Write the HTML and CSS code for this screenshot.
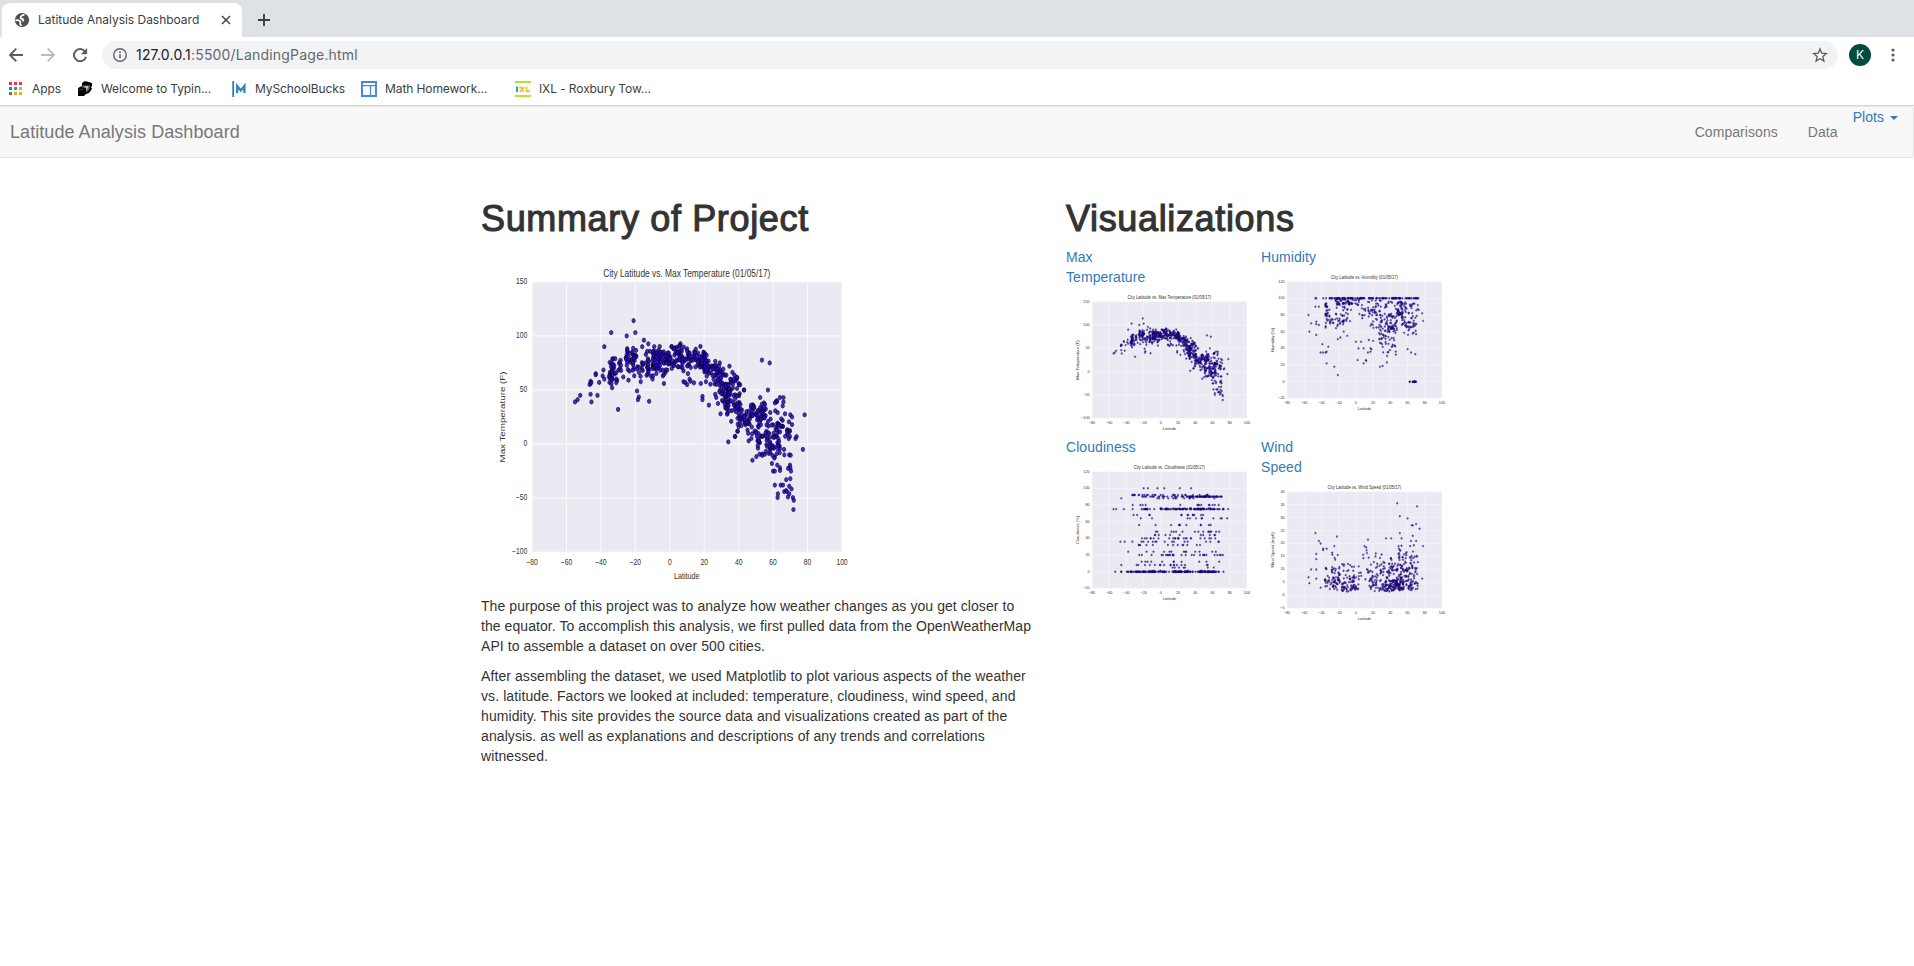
FILE: index.html
```html
<!DOCTYPE html>
<html lang="en">
<head>
<meta charset="utf-8">
<title>Latitude Analysis Dashboard</title>
<link rel="stylesheet" href="styles.css">
</head>
<body>
<header class="browser">
  <div class="tabstrip">
    <div class="tab">
      <svg class="globe" width="16" height="16" viewBox="0 0 16 16"><circle cx="8" cy="8" r="7.1" fill="#4d5156"/><path d="M9.800 2.800C8 3 7 4 6.600 5.300c-.2 1.100.6 1.500 1.700 1.600 1.200.2 1.300 1 .7 1.900M2.200 8.300c1.700-.3 3.200.2 4.100 1.200.4 1-.2 1.600-.3 2.700l1.200.9" fill="none" stroke="#fff" stroke-width="1.700" stroke-linecap="round"/></svg>
      <span class="tab-title">Latitude Analysis Dashboard</span>
      <svg class="close" width="10" height="10" viewBox="0 0 10 10"><path d="M1 1l8 8M9 1l-8 8" stroke="#45494d" stroke-width="1.600"/></svg>
    </div>
    <svg class="plus" width="12" height="12" viewBox="0 0 12 12"><path d="M6 0v12M0 6h12" stroke="#3c4043" stroke-width="1.900"/></svg>
  </div>
  <div class="toolbar">
    <svg class="tool" width="16" height="16" viewBox="0 0 16 16"><path d="M15 8H2.500M8.300 1.700L2 8l6.300 6.300" fill="none" stroke="#5a5e63" stroke-width="1.900"/></svg>
    <svg class="tool" width="16" height="16" viewBox="0 0 16 16"><path d="M1 8h12.500M7.700 1.700L14 8l-6.300 6.300" fill="none" stroke="#babcbe" stroke-width="1.900"/></svg>
    <svg class="tool" width="16" height="16" viewBox="0 0 16 16"><path d="M12.800 4.200A6.100 6.100 0 1 0 14 9.700" fill="none" stroke="#5a5e63" stroke-width="2"/><path d="M15.100 1v6.200H8.900z" fill="#5a5e63"/></svg>
    <div class="omnibox">
      <svg width="16" height="16" viewBox="0 0 16 16"><circle cx="8" cy="8" r="6.300" fill="none" stroke="#5f6368" stroke-width="1.400"/><path d="M8 7.200v4M8 4.300v1.600" stroke="#5f6368" stroke-width="1.600"/></svg>
      <span class="url"><b>127.0.0.1</b>:5500/LandingPage.html</span>
      <svg class="star" width="16" height="16" viewBox="0 0 16 16"><path d="M8 2l1.750 4.200 4.550.4-3.450 3 1.050 4.450L8 11.700l-3.900 2.350 1.050-4.450-3.450-3 4.550-.4z" fill="none" stroke="#5a5e63" stroke-width="1.350"/></svg>
    </div>
    <div class="avatar">K</div>
    <svg class="menu" width="4" height="14" viewBox="0 0 4 14"><g fill="#5a5e63"><circle cx="2" cy="2" r="1.600"/><circle cx="2" cy="7" r="1.600"/><circle cx="2" cy="12" r="1.600"/></g></svg>
  </div>
  <div class="bookmarks">
    <div class="mark apps"><svg width="14" height="14" viewBox="0 0 14 14"><path fill="#ee3344" d="M0 0h3v3H0zM5 0h3v3H5zM10 0h3v3h-3z"/><path fill="#249a5a" d="M0 5h3v3H0zM0 10h3v3H0z"/><path fill="#4285f4" d="M5 5h3v3H5z"/><path fill="#f4a62a" d="M10 5h3v3h-3zM5 10h3v3H5zM10 10h3v3h-3z"/></svg><span>Apps</span></div>
    <div class="mark typing"><svg width="16" height="16" viewBox="0 0 16 16"><path d="M5 2l3-2 7 2v3l-1 1 1 2-3 4-3 1-2 2H1V7l4-2z" fill="#050505"/><path d="M6 4.500h7l-1 4-3 3v-4L5 6z" fill="#777"/><path d="M8 5l3 .5-1 3z" fill="#ddd"/><path d="M2 9l4-1" stroke="#444"/></svg><span>Welcome to Typin...</span></div>
    <div class="mark school"><svg width="16" height="16" viewBox="0 0 16 16"><path d="M1.200 0v16" stroke="#3279b7" stroke-width="1.800"/><path d="M5.200 12V5l3.600 4.500L12.400 5v7" fill="none" stroke="#3185c5" stroke-width="2.300"/></svg><span>MySchoolBucks</span></div>
    <div class="mark math"><svg width="16" height="16" viewBox="0 0 16 16"><rect x="1" y="1" width="14" height="14" fill="#fff" stroke="#4a86e8" stroke-width="2"/><path d="M2 4.700h12M9.500 4.700V14" stroke="#4a86e8" stroke-width="1.200"/></svg><span>Math Homework...</span></div>
    <div class="mark ixl"><svg width="16" height="16" viewBox="0 0 16 16"><path fill="#aae43c" d="M0 0h16v2H0zM0 14h16v2H0z"/><path fill="#18a7d5" d="M1 5.500h2V11H1z"/><path d="M4.500 6.200h1L9 10.300M4.500 10.300h1L9 6.200M11.500 5.500v4.700H15" stroke="#f5bd35" stroke-width="1.900" fill="none"/></svg><span>IXL - Roxbury Tow...</span></div>
  </div>
</header>

<nav class="navbar">
  <a class="brand">Latitude Analysis Dashboard</a>
  <div class="links">
    <a class="comparisons">Comparisons</a>
    <a class="data">Data</a>
    <a class="plots">Plots <i class="caret"></i></a>
  </div>
</nav>

<main class="container">
  <section class="summary">
    <h1>Summary of Project</h1>
    <svg class="chart main-chart" data-plot="temp"></svg>
    <p>The purpose of this project was to analyze how weather changes as you get closer to<br>the equator. To accomplish this analysis, we first pulled data from the OpenWeatherMap<br>API to assemble a dataset on over 500 cities.</p>
    <p class="method">After assembling the dataset, we used Matplotlib to plot various aspects of the weather<br>vs. latitude. Factors we looked at included: temperature, cloudiness, wind speed, and<br>humidity. This site provides the source data and visualizations created as part of the<br>analysis. as well as explanations and descriptions of any trends and correlations<br>witnessed.</p>
  </section>
  <section class="visuals">
    <h1>Visualizations</h1>
    <div class="grid">
      <div><a>Max<br>Temperature</a><svg class="chart thumb" data-plot="temp"></svg></div>
      <div><a>Humidity</a><svg class="chart thumb" data-plot="humidity"></svg></div>
      <div><a>Cloudiness</a><svg class="chart thumb" data-plot="cloud"></svg></div>
      <div><a>Wind<br>Speed</a><svg class="chart thumb" data-plot="wind"></svg></div>
    </div>
  </section>
</main>
<script src="charts.js"></script>
</body>
</html>
```

FILE: styles.css
```css
* { box-sizing: border-box; }
body { margin: 0; background: #fff; color: #333; font: 14px/20px "Liberation Sans", Arial, sans-serif; overflow: hidden; }
svg { display: block; flex: none; }
a { color: #337ab7; letter-spacing: .06px; }

.browser { font-family: Inter, Roboto, sans-serif; color: #3c4043; height: 106px; border-bottom: 1px solid #d5d6d8; }
.tabstrip { height: 37px; background: #dee1e6; display: flex; padding: 3px 0 0 2px; }
.tab { width: 240px; height: 34px; background: #fff; border-radius: 8px 8px 0 0; display: flex; align-items: center; padding-left: 12px; }
.tab-title { width: 170px; margin-left: 8px; font-size: 12px; letter-spacing: -.02px; white-space: nowrap; }
.close { margin-left: 13px; }
.plus { margin: 11px 0 0 16px; }
.toolbar { height: 34px; display: flex; align-items: center; padding: 2px 0 0 8px; }
.tool { margin-right: 16px; }
.omnibox { width: 1736px; height: 28px; margin-left: -2px; border-radius: 14px; background: #f1f3f4; display: flex; align-items: center; padding: 0 10px; }
.url { margin-left: 8px; font-size: 14px; color: #66696d; letter-spacing: .19px; white-space: nowrap; }
.url b { font-weight: 400; color: #202124; }
.star { margin-left: auto; }
.avatar { width: 22px; height: 22px; margin-left: 11px; border-radius: 50%; background: #004d40; color: #fff; font-size: 12px; line-height: 22px; text-align: center; }
.menu { margin-left: 20px; }
.bookmarks { height: 34px; display: flex; align-items: center; padding: 2px 0 0 9px; font-size: 12px; letter-spacing: -.1px; }
.mark { display: flex; align-items: center; white-space: nowrap; }
.mark svg { margin-right: 8px; }
.apps { width: 68px; }
.apps svg { margin-right: 9px; }
.typing { width: 155px; }
.school { width: 129px; }
.school svg { margin-right: 7px; }
.math { width: 154px; }

.navbar { height: 52px; border: 1px solid #e7e7e7; border-left: 0; border-radius: 0 4px 4px 0; background: #f8f8f8; display: flex; justify-content: space-between; padding: 0 15px 0 10px; }
.navbar a { color: #777; line-height: 20px; }
.navbar .brand { font-size: 18px; padding-top: 15px; }
.links { display: flex; }
.comparisons, .data { padding: 15px 15px 0; }
.navbar .plots { color: #337ab7; }
.caret { display: inline-block; border: 4px solid transparent; border-top-color: #337ab7; border-bottom: 0; margin-left: 2px; vertical-align: middle; }

.container { display: flex; padding: 41px 0 0 481px; }
.summary { width: 585px; }
h1 { margin: 0 0 8px; font-size: 36px; line-height: 40px; font-weight: 400; letter-spacing: .65px; -webkit-text-stroke: 1.1px #333; }
p { margin: 0 0 10px; white-space: nowrap; letter-spacing: .068px; }
.method { letter-spacing: .09px; }
.main-chart { width: 400px; height: 338px; margin: 9px 0 10px 1px; }
.grid { display: grid; grid-template-columns: 195px 195px; grid-auto-rows: 190px; }
.grid a { display: block; }
.thumb { width: 200px; height: 146px; margin-left: 1px; }
.chart { font-family: "Liberation Sans", Arial, sans-serif; }
.chart text { fill: #333; }
.chart .label { font-size: 9px; }
.chart .tick { font-size: 8.4px; }
.chart .title { font-size: 10.5px; }
.chart .plane { fill: #eaeaf2; }
.chart .lines { stroke: #fff; stroke-width: .9; }
.chart circle { fill: #2c04e0; stroke: #08001f; stroke-width: .9; opacity: .85; }
.thumb circle { fill: #2a04b0; stroke: #10004a; opacity: .75; }
.thumb .title { font-size: 11.5px; }
.thumb .label, .thumb .tick { font-size: 9.5px; }
```

FILE: charts.js
```js
// Scatter plots, 180 degrees of latitude on the x axis.
function rng(seed) {
  return function () {
    seed = (seed * 1664525 + 1013904223) % 4294967296;
    return seed / 4294967296;
  };
}
function normal(r) { return r() + r() + r() + r() - 2; }

function temperature() {
  const r = rng(17);
  const pts = [[-21,114],[-34,103],[-25,100],[-20,103],[-15,96],[-38,90],[-16,90],[-55,39],[-53.5,41],[-52,45],[-46,46],[-45.5,39],[-42,45],[-30,32],[-19,49],[-18,43.5],[-18.5,41],[-12,39.5],[-46,56],[-46.5,55],[-46,58],[-45.6,57],[-43,65],[-43,64],[-41,57],[-39,63],[-38.5,68.5],[-38,60],[-35,57],[-31,60],[-27,62],[-24,59],[-9,90],[1,90],[10,88],[53.5,77.6],[58,75],[29,75],[57,50],[78.3,27],[77.3,-5],[73.6,7],[73,5],[34,2],[38,7],[37.8,7],[48,-15],[29.5,28],[22.7,36],[19,44],[19,41],[26.4,46],[27,43],[28,37.500],[8,57.6],[10,55],[14,56.6],[18,56],[21,57.6],[11.5,60],[10.6,65],[9,57],[12,58],[-3.4,56],[-2.6,66],[-4,63],[-10,60],[-11,63],
    [59.3,-18],[62.4,-19.5],[64,-22],[64,-24.5],[60,-25],[61,-25],[69.8,-19.5],[68.7,-22.5],[70,-22],[70.4,-25],[67.6,-33],[70,-32],[61,-38],[64.4,-38],[65.7,-38],[69.4,-39],[70.7,-41.6],[66.5,-44],[67.6,-43],[68,-44],[62.8,-46],[62.6,-49.5],[68.6,-49],[69.4,-46],[71.5,-49.5],[72,-52],[71.8,-60.6],[61,-12],[60.7,-13],[66.5,-10],[69.4,-10],[63.8,-8],[66.3,-5],[64,43],[66,43],[66,39],[62,39],[62.3,40],[52.5,43],[54.7,38],[70,27],[71,25],[71,18],[43,50],[43.2,50],[40,56]];
  // [lat from, lat to, temp at start, temp at end, half spread, count]
  [[-36,-28,66,74,12,24],[-34.500,-33,69,70,8,10],[-26,-19,79,80,8,30],[-30,-18,69,71,9,12],[-18,-9,68,72,9,24],[-15,-7,80,80,9,17],[-10,8,78,79,11,100],[8,20,78,80,9,38],[14,21,79,77,7,20],[20,30,73,63,10,52],[28,34,56,48,14,38],[31,34,36,33,8,10],[34,42,48,36,20,42],[31,40,60,58,5,10],[39,46,24,22,9,30],[46,56,31,29,7,44],[43,53,20,8,12,15],[50,59,3,1,14,32],[52,62,23,28,13,15],[59,64,2,-1,13,22],[62,71,17,10,19,28]]
    .forEach(([a, b, c, d, s, n]) => {
      for (let i = 0; i < n; i++) {
        const t = r();
        pts.push([a + t * (b - a), c + t * (d - c) + normal(r) * s]);
      }
    });
  return pts;
}

function humidity() {
  const r = rng(8);
  const pts = [[-55,80],[-54,60],[-52,70],[-46,56],[-47,90],[-43,90],[-46,72],[-46,69],[-43,68],[-39,45],[-41,35],[-38,35],[-35,35],[-34,36],[-32,42],[-34,22],[-25,18],[-21,8],[-21,51],[-18,53],[-10,55],[2,26],[9,22],[11.5,26],[12,25],[14,35],[28,18],[31,19],[36,23],[60,39],[64,35],[69,33],[78,73],[77,82],[73,86],[70,57],[3,40],[9,40],[17,40],[18,39],[17,36],[0,48],[6,48],[15,50],[20,49],[-47,100],[-46,100],[-38,100]];
  const band = (n, a, b, low, high) => { for (let i = 0; i < n; i++) pts.push([a + r() * (b - a), low + r() * (high - low)]); };
  band(75, -26, 48, 100, 100);
  band(25, 45, 73, 100, 100);
  band(6, -36, -26, 100, 100);
  band(22, -35.500, -33, 64, 94);
  band(50, -24, 4, 92, 99);
  band(32, -33, -5, 70, 90);
  band(20, -32, -12, 60, 76);
  band(28, 4, 26, 64, 98);
  band(26, 14, 30, 78, 98);
  band(42, 26, 48, 58, 97);
  band(30, 48, 54, 80, 96);
  band(38, 45, 72, 76, 96);
  band(30, 53, 70, 65, 80);
  band(16, 56, 71, 56, 72);
  band(24, 36, 48, 62, 80);
  band(26, 27, 35, 44, 72);
  band(22, 37, 46, 42, 66);
  band(9, 31, 48, 30, 42);
  band(11, 65, 72, 0, 0);
  band(2, 62, 63, 0, 0);
  return pts;
}

function cloudiness() {
  const r = rng(33);
  const pts = [[-53,0],[-46,0],[-46,0],[-46,88],[-55,75],[-52,75],[-43,75],[-38,24],[-47,36],[-46,8],[-42,36],[77,64],[78,75],[-20,100],[-15,100],[-4,100],[4,100],[22,100],[35,100],[72,20]];
  const row = (y, a, b, n) => { for (let i = 0; i < n; i++) pts.push([a + r() * (b - a), y]); };
  row(0, -41, 73, 120); row(0, 15, 60, 40); row(1, -20, 70, 12);
  row(90, -23, 73, 40); row(90, 30, 66, 40); row(92, -35, 65, 28); row(88, -8, 66, 12);
  row(75, -35, 73, 68); row(75, 30, 60, 22); row(76, -10, 65, 12);
  row(80, -36, 71, 14); row(68, -35, 65, 13); row(64, -35, 72, 10); row(56, -26, 66, 11);
  row(48, -28, 71, 15); row(44, -20, 70, 11); row(40, -30, 68, 24); row(36, -36, 68, 16); row(32, -26, 58, 13);
  row(24, -27, 67, 12); row(20, -28, 71, 26); row(12, -33, 69, 11); row(8, -35, 73, 17); row(5, 0, 68, 7);
  return pts;
}

function wind() {
  const r = rng(71);
  const pts = [[-55,7],[-54,4.700],[-52,10],[-47,24],[-46,16],[-46,14],[-46,10],[-46,6.500],[-43,21],[-41,20],[-38,18],[-38,17.500],[-34,18],[-22,22.700],[-25,19],[-41,3],[14,21.500],[10,19],[12,18.500],[35,22],[41,22],[48,35.500],[51,30.500],[60,29.700],[71,34.300],[51,24],[53,22],[65,27],[66,27],[70,27.500],[74,25.700],[66,23],[64,21],[70,21],[78,19],[77,6.500],[71,15],[63,19],[50,18],[51,17.500]];
  // [count, lat from, lat to, lowest speed, typical rise, peak]
  [[75,-16,4,1.500,5,11],[42,-36,-18,2.500,8,15],[18,-28,-18,3,6,8],[90,15,48,1.500,5.500,11],[125,45,72,2,5,13],[48,38,62,5,8,12],[32,5,35,6,9,13],[50,28,56,2,2.500,4],[16,-37,-15,2,4,6],[15,48,71,11,6,9]]
    .forEach(([n, a, b, low, rise, peak]) => {
      for (let i = 0; i < n; i++) {
        const q = r();
        pts.push([a + r() * (b - a), low + q * rise + q * q * q * q * (peak - rise)]);
      }
    });
  return pts;
}

const PLOTS = {
  temp: { title: "City Latitude vs. Max Temperature (01/05/17)", w: 209, y: "Max Temperature (F)", yw: 91, min: -100, max: 150, step: 50, pts: temperature() },
  humidity: { title: "City Latitude vs. Humidity (01/05/17)", w: 168, y: "Humidity (%)", yw: 57, min: -20, max: 120, step: 20, pts: humidity() },
  cloud: { title: "City Latitude vs. Cloudiness (01/05/17)", w: 178, y: "Cloudiness (%)", yw: 66, min: -20, max: 120, step: 20, pts: cloudiness() },
  wind: { title: "City Latitude vs. Wind Speed (01/05/17)", w: 184, y: "Wind Speed (mph)", yw: 82, min: -5, max: 40, step: 5, pts: wind() }
};

document.querySelectorAll(".chart").forEach((svg) => {
  const p = PLOTS[svg.dataset.plot];
  const X = (v) => 62.5 + (v + 80) / 180 * 387.5;
  const Y = (v) => 33.8 + (p.max - v) / (p.max - p.min) * 270.4;
  const num = (v) => (v < 0 ? "\u2212" + -v : "" + v);
  let s = '<rect class="plane" x="62.5" y="33.8" width="387.5" height="270.4"/><g class="lines">';
  let t = "";
  for (let v = -80; v <= 100; v += 20) {
    s += `<path d="M${X(v)} 33.8V304.2"/>`;
    t += `<text class="tick" text-anchor="middle" x="${X(v)}" y="317.3">${num(v)}</text>`;
  }
  for (let v = p.min; v <= p.max; v += p.step) {
    s += `<path d="M62.5 ${Y(v)}H450"/>`;
    t += `<text class="tick" text-anchor="end" x="56.5" y="${Y(v) + 2.3}">${num(v)}</text>`;
  }
  s += "</g>";
  p.pts.forEach(([a, b]) => { s += `<circle cx="${X(a).toFixed(1)}" cy="${Y(b).toFixed(1)}" r="2.1"/>`; });
  s += t;
  s += `<text class="title" x="${256 - p.w / 2}" y="28.8" textLength="${p.w}" lengthAdjust="spacingAndGlyphs">${p.title}</text>`;
  s += '<text class="label" text-anchor="middle" x="256" y="331.3">Latitude</text>';
  s += `<text class="label" transform="translate(29 ${169 + p.yw / 2}) rotate(-90)" textLength="${p.yw}" lengthAdjust="spacingAndGlyphs">${p.y}</text>`;
  svg.setAttribute("viewBox", "0 0 500 338");
  svg.setAttribute("preserveAspectRatio", "none");
  svg.innerHTML = s;
});
```
